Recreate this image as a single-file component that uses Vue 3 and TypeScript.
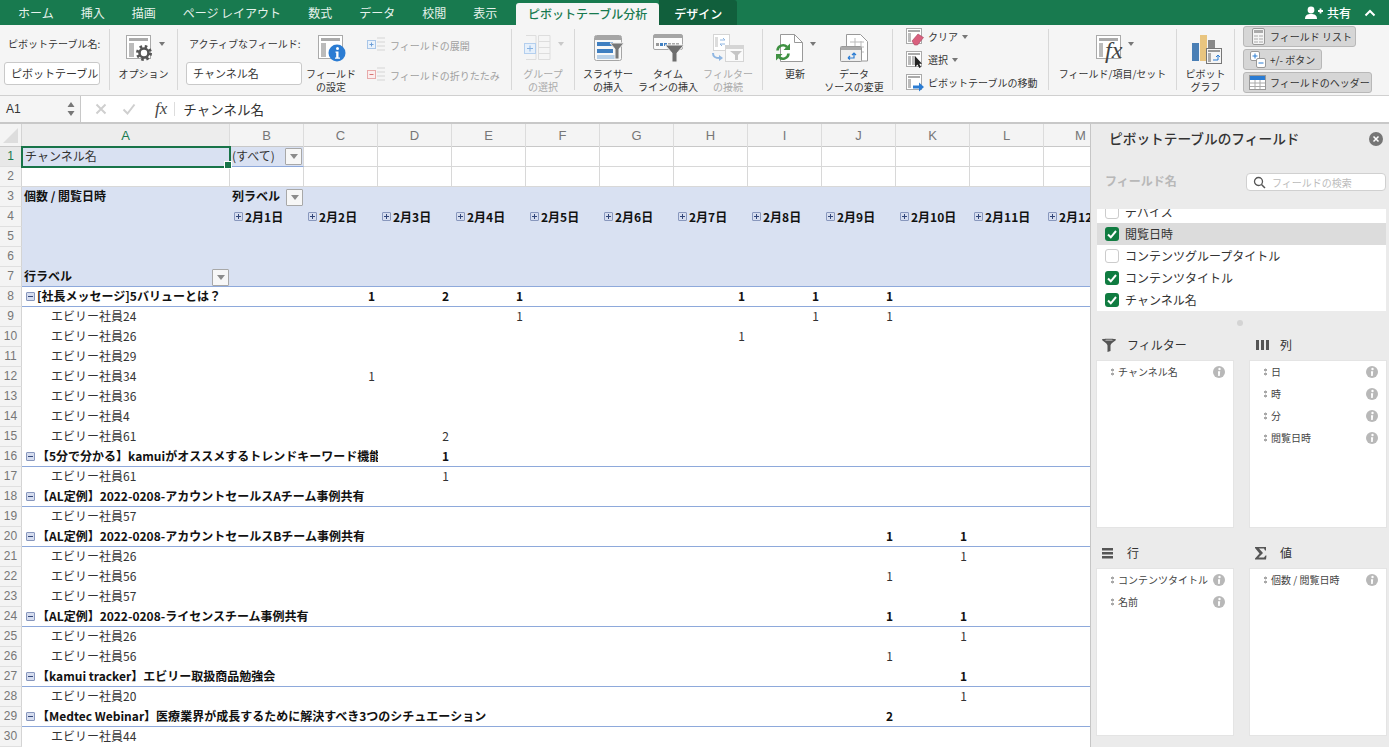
<script setup lang="ts">
type SheetRow = { n: number; label: string; bold?: boolean; values?: Record<number, number> }

const C = 4, D = 5, E = 6, H = 9, I = 10, J = 11, K = 12

const tabs = ['ホーム', '挿入', '描画', 'ページ レイアウト', '数式', 'データ', '校閲', '表示']
const columns = ['A', 'B', 'C', 'D', 'E', 'F', 'G', 'H', 'I', 'J', 'K', 'L', 'M']
const dates = ['2月1日', '2月2日', '2月3日', '2月4日', '2月5日', '2月6日', '2月7日', '2月8日', '2月9日', '2月10日', '2月11日', '2月12日']

const rows: SheetRow[] = [
  { n: 8, label: '[社長メッセージ]5バリューとは？', bold: true, values: { [C]: 1, [D]: 2, [E]: 1, [H]: 1, [I]: 1, [J]: 1 } },
  { n: 9, label: 'エビリー社員24', values: { [E]: 1, [I]: 1, [J]: 1 } },
  { n: 10, label: 'エビリー社員26', values: { [H]: 1 } },
  { n: 11, label: 'エビリー社員29' },
  { n: 12, label: 'エビリー社員34', values: { [C]: 1 } },
  { n: 13, label: 'エビリー社員36' },
  { n: 14, label: 'エビリー社員4' },
  { n: 15, label: 'エビリー社員61', values: { [D]: 2 } },
  { n: 16, label: '【5分で分かる】kamuiがオススメするトレンドキーワード機能', bold: true, values: { [D]: 1 } },
  { n: 17, label: 'エビリー社員61', values: { [D]: 1 } },
  { n: 18, label: '【AL定例】2022-0208-アカウントセールスAチーム事例共有', bold: true },
  { n: 19, label: 'エビリー社員57' },
  { n: 20, label: '【AL定例】2022-0208-アカウントセールスBチーム事例共有', bold: true, values: { [J]: 1, [K]: 1 } },
  { n: 21, label: 'エビリー社員26', values: { [K]: 1 } },
  { n: 22, label: 'エビリー社員56', values: { [J]: 1 } },
  { n: 23, label: 'エビリー社員57' },
  { n: 24, label: '【AL定例】2022-0208-ライセンスチーム事例共有', bold: true, values: { [J]: 1, [K]: 1 } },
  { n: 25, label: 'エビリー社員26', values: { [K]: 1 } },
  { n: 26, label: 'エビリー社員56', values: { [J]: 1 } },
  { n: 27, label: '【kamui tracker】エビリー取扱商品勉強会', bold: true, values: { [K]: 1 } },
  { n: 28, label: 'エビリー社員20', values: { [K]: 1 } },
  { n: 29, label: '【Medtec Webinar】医療業界が成長するために解決すべき3つのシチュエーション', bold: true, values: { [J]: 2 } },
  { n: 30, label: 'エビリー社員44' },
]

function labelEnd(row: SheetRow) {
  const keys = Object.keys(row.values ?? {}).map(Number)
  return keys.length ? Math.min(...keys) : 15
}

function valueEntries(row: SheetRow) {
  return Object.entries(row.values ?? {}).map(([col, value]) => ({ col: Number(col), value }))
}

const fields = [
  { name: 'デバイス', checked: false },
  { name: '閲覧日時', checked: true, active: true },
  { name: 'コンテンツグループタイトル', checked: false },
  { name: 'コンテンツタイトル', checked: true },
  { name: 'チャンネル名', checked: true },
]

const areas = [
  { title: 'フィルター', icon: 'filter', items: ['チャンネル名'] },
  { title: '列', icon: 'cols', items: ['日', '時', '分', '閲覧日時'] },
  { title: '行', icon: 'rows', items: ['コンテンツタイトル', '名前'] },
  { title: '値', icon: 'sum', items: ['個数 / 閲覧日時'] },
]
</script>

<template>
  <div class="app">
    <header class="tabbar">
      <nav class="tabs">
        <span v-for="tab in tabs" :key="tab" class="tab">{{ tab }}</span>
        <span class="tab-active">ピボットテーブル分析</span>
        <span class="tab-design">デザイン</span>
      </nav>
      <div class="share">
        <svg width="18" height="14" viewBox="0 0 18 14">
          <circle cx="6" cy="4" r="3.4" fill="#fff" />
          <path d="M0 13c0-4 2.5-5 6-5s6 1 6 5z" fill="#fff" />
          <path d="M13 5h5M15.5 2.500v5" stroke="#fff" stroke-width="1.800" />
        </svg>
        <span>共有</span>
        <svg class="chev" width="12" height="8" viewBox="0 0 12 8">
          <path d="M1.500 6.500 6 2l4.500 4.500" fill="none" stroke="#fff" stroke-width="2" />
        </svg>
      </div>
    </header>

    <section class="ribbon">
      <div class="group g1">
        <div class="field-label">ピボットテーブル名:</div>
        <div class="input">ピボットテーブル</div>
      </div>
      <i class="sep"></i>
      <div class="group g2">
        <div class="rbtn wide">
          <svg width="50" height="28" viewBox="0 0 50 28">
            <rect x="7.500" y="1.500" width="24" height="23" fill="#fff" stroke="#aaa" />
            <rect x="10" y="4" width="19" height="3" fill="#aaa" />
            <rect x="10" y="9" width="5" height="14" fill="#bbb" />
            <circle cx="25" cy="19" r="6.500" fill="none" stroke="#555" stroke-width="3" stroke-dasharray="2.500 2.600" />
            <circle cx="25" cy="19" r="4.500" fill="none" stroke="#555" stroke-width="2.600" />
            <path d="M40 8h6l-3 4z" fill="#777" />
          </svg>
          <span>オプション</span>
        </div>
      </div>
      <i class="sep"></i>
      <div class="group g3">
        <div class="field-col">
          <div class="field-label">アクティブなフィールド:</div>
          <div class="input">チャンネル名</div>
        </div>
        <div class="rbtn settings">
          <svg width="30" height="28" viewBox="0 0 30 28">
            <rect x="2.500" y="1.500" width="24" height="23" fill="#fff" stroke="#aaa" />
            <rect x="5" y="4" width="19" height="3" fill="#aaa" />
            <rect x="5" y="9" width="5" height="14" fill="#bbb" />
            <circle cx="21" cy="19" r="8.500" fill="#2b7cd3" />
            <circle cx="21.500" cy="14.500" r="1.500" fill="#fff" />
            <path d="M19.500 17.500h3v6h1.500v1.200h-5v-1.200h1.200v-4.800h-.7z" fill="#fff" />
          </svg>
          <span>フィールド<br />の設定</span>
        </div>
        <div class="drill">
          <div class="drill-row">
            <svg width="18" height="16" viewBox="0 0 18 16">
              <rect x=".5" y="3.500" width="8" height="8" fill="#eaf2fb" stroke="#a9c6e8" />
              <path d="M2.500 7.500h4M4.500 5.500v4" stroke="#6d9fd8" />
              <path d="M10 1h8M10 5h8M10 9h8M10 13h8" stroke="#d5d5d5" />
            </svg>
            <span>フィールドの展開</span>
          </div>
          <div class="drill-row">
            <svg width="18" height="16" viewBox="0 0 18 16">
              <rect x=".5" y="3.500" width="8" height="8" fill="#fbeeee" stroke="#e8aaaa" />
              <path d="M2.500 7.500h4" stroke="#d87474" />
              <path d="M10 1h8M10 5h8M10 9h8M10 13h8" stroke="#d5d5d5" />
            </svg>
            <span>フィールドの折りたたみ</span>
          </div>
        </div>
      </div>
      <i class="sep"></i>
      <div class="group g4">
        <div class="rbtn wide off">
          <svg width="50" height="28" viewBox="0 0 50 28">
            <path d="M8 1.500h10v24H8M20.500 1.500h11.500v24H20.500zM20.500 7.500h11.500M20.500 13.500h11.500M20.500 19.500h11.500" fill="none" stroke="#ddd" />
            <rect x="6.500" y="9.500" width="11" height="10" fill="#e6f0fb" stroke="#b4cfee" />
            <path d="M9 14.500h6M12 11.500v6" stroke="#86b2e2" />
            <path d="M40 8h6l-3 4z" fill="#c9c9c9" />
          </svg>
          <span>グループ<br />の選択</span>
        </div>
      </div>
      <i class="sep"></i>
      <div class="group g5">
        <div class="rbtn">
          <svg width="40" height="28" viewBox="0 0 40 28">
            <rect x="6.500" y="1.500" width="27" height="25" rx="2" fill="#f8f8f8" stroke="#a5a5a5" />
            <rect x="7" y="2" width="26" height="4" fill="#a5a5a5" />
            <rect x="9" y="8" width="16" height="4" fill="#3f7fc1" />
            <rect x="9" y="15" width="16" height="4" fill="#3f7fc1" />
            <rect x="9" y="21" width="20" height="4" fill="#b8d0e8" />
            <path d="M22 9h14l-5 6v10h-4v-10z" fill="#777" stroke="#eee" />
          </svg>
          <span>スライサー<br />の挿入</span>
        </div>
        <div class="rbtn">
          <svg width="60" height="28" viewBox="0 0 60 28">
            <rect x="15.500" y=".5" width="29" height="15" rx="1.500" fill="#fbfbfb" stroke="#a5a5a5" />
            <rect x="16" y="1" width="28" height="3" fill="#a5a5a5" />
            <path d="M18 9h3v3h-3z" fill="#999" />
            <path d="M22 9h3v3h-3zM26 9h3v3h-3z" fill="#3f7fc1" />
            <path d="M30 9h3v3h-3zM34 9h3v3h-3zM38 9h3v3h-3z" fill="#aaa" />
            <path d="M27 11h19l-7 8v9h-5v-9z" fill="#6d6d6d" stroke="#f0f0f0" />
          </svg>
          <span>タイム<br />ラインの挿入</span>
        </div>
        <div class="rbtn off">
          <svg width="40" height="28" viewBox="0 0 40 28">
            <rect x="5.500" y=".5" width="16" height="16" fill="#fff" stroke="#d5d5d5" />
            <rect x="7" y="3" width="3" height="10" fill="#ddd" />
            <path d="M12 6h5l-2-2M17 10h-5l2 2" fill="none" stroke="#8fb6e2" />
            <path d="M5 19c0 4 2 5 7 5" fill="none" stroke="#8fb6e2" stroke-width="2" />
            <path d="M11 21l4 3-4 3z" fill="#8fb6e2" />
            <rect x="17.500" y="11.500" width="18" height="16" fill="#fafafa" stroke="#d5d5d5" />
            <rect x="18" y="12" width="17" height="3" fill="#d5d5d5" />
            <path d="M22 17h12l-4 4v5h-3v-5z" fill="#c5c5c5" />
          </svg>
          <span>フィルター<br />の接続</span>
        </div>
      </div>
      <i class="sep"></i>
      <div class="group g6">
        <div class="rbtn update">
          <svg width="50" height="28" viewBox="0 0 50 28">
            <path d="M10.500 .5h14l8 8v19h-22z" fill="#fff" stroke="#999" />
            <path d="M24.500 .5v8h8" fill="none" stroke="#999" />
            <path d="M7.500 16.500a5.500 5.500 0 0 1 9.500-3.500M18.500 19.500a5.500 5.500 0 0 1-9.500 3.500" fill="none" stroke="#3f9142" stroke-width="2.600" />
            <path d="M20 9.500v6.500h-6.500zM6 26.500V20h6.500z" fill="#3f9142" />
            <path d="M40 8h6l-3 4z" fill="#777" />
          </svg>
          <span>更新</span>
        </div>
        <div class="rbtn source">
          <svg width="40" height="28" viewBox="0 0 40 28">
            <path d="M12.500 .5h14l7 7v19.500h-21z" fill="#fff" stroke="#999" />
            <path d="M16 8h14M16 13h14M16 18h14M21 4v20M27 7v17" stroke="#bbb" />
            <rect x="6.500" y="12.500" width="21" height="15" rx="1" fill="#eee" stroke="#999" />
            <rect x="7" y="13" width="20" height="3" fill="#aaa" />
            <path d="M14 24h6v-4M18 21l2-2 2 2M14 24l2-2M14 24l2 1.500" fill="none" stroke="#2b7cd3" stroke-width="1.200" />
          </svg>
          <span>データ<br />ソースの変更</span>
        </div>
      </div>
      <i class="sep"></i>
      <div class="group g7">
        <div class="small-row">
          <svg width="18" height="18" viewBox="0 0 18 18">
            <rect x=".5" y=".5" width="15" height="15" fill="#fff" stroke="#aaa" />
            <rect x="2" y="2" width="12" height="2" fill="#aaa" />
            <rect x="2" y="5" width="3" height="9" fill="#bbb" />
            <path d="M6 13l6-7 5.500 3.500-6 7.500h-3z" fill="#d9607e" stroke="#a84560" stroke-width=".6" />
          </svg>
          <span>クリア</span>
          <b class="caret"></b>
        </div>
        <div class="small-row">
          <svg width="18" height="18" viewBox="0 0 18 18">
            <rect x=".5" y=".5" width="15" height="15" fill="#fff" stroke="#aaa" />
            <rect x="2" y="2" width="12" height="2" fill="#aaa" />
            <rect x="2" y="5" width="3" height="9" fill="#bbb" />
            <rect x="6" y="5" width="3" height="9" fill="#bbb" />
            <path d="M9 5v11l2.500-2.500 1.800 3.500 1.700-.9-1.800-3.400H16z" fill="#222" />
          </svg>
          <span>選択</span>
          <b class="caret"></b>
        </div>
        <div class="small-row">
          <svg width="18" height="18" viewBox="0 0 18 18">
            <rect x=".5" y=".5" width="15" height="15" fill="#fff" stroke="#aaa" />
            <rect x="2" y="2" width="12" height="2" fill="#aaa" />
            <rect x="2" y="5" width="3" height="9" fill="#bbb" />
            <path d="M7 11.500h6v-3l5 4.500-5 4.500v-3h-6z" fill="#2b7cd3" />
          </svg>
          <span>ピボットテーブルの移動</span>
        </div>
      </div>
      <i class="sep"></i>
      <div class="group g8">
        <div class="rbtn wide">
          <svg width="50" height="28" viewBox="0 0 50 28">
            <rect x="8.500" y="1.500" width="24" height="23" fill="#fff" stroke="#aaa" />
            <rect x="11" y="4" width="19" height="3" fill="#aaa" />
            <rect x="11" y="9" width="4" height="14" fill="#bbb" />
            <text x="17" y="24" class="fx-big">fx</text>
            <path d="M40 8h6l-3 4z" fill="#777" />
          </svg>
          <span>フィールド/項目/セット</span>
        </div>
      </div>
      <i class="sep"></i>
      <div class="group g9">
        <div class="rbtn wide chart">
          <svg width="34" height="30" viewBox="0 0 34 30">
            <rect x="3" y="9" width="7" height="18" fill="#4a7fb5" />
            <rect x="11" y="1" width="7" height="26" fill="#e9c57f" />
            <rect x="19" y="6" width="7" height="8" fill="#888" />
            <rect x="17.500" y="14.500" width="15" height="15" fill="#f5f5f5" stroke="#777" />
            <rect x="19" y="16" width="12" height="2" fill="#999" />
            <rect x="19" y="19" width="3" height="9" fill="#aaa" />
            <path d="M24 26h5v-5M27 23l2-2 2 2" fill="none" stroke="#2b7cd3" />
          </svg>
          <span>ピボット<br />グラフ</span>
        </div>
      </div>
      <i class="sep"></i>
      <div class="group g10">
        <div class="toggle t1">
          <svg width="13" height="17" viewBox="0 0 13 17">
            <rect x=".5" y=".5" width="12" height="16" rx="1.500" fill="#f4f4f4" stroke="#999" />
            <rect x="2" y="2" width="9" height="3" fill="#aaa" />
            <path d="M2 8h4M7 8h4M2 11h4M7 11h4M2 14h4M7 14h4" stroke="#aaa" />
          </svg>
          <span>フィールド リスト</span>
        </div>
        <div class="toggle t2">
          <svg width="16" height="17" viewBox="0 0 16 17">
            <rect x=".5" y=".5" width="9" height="9" rx="1.500" fill="#fff" stroke="#999" />
            <path d="M2.500 5h5M5 2.500v5" stroke="#2b7cd3" />
            <rect x="6.500" y="7.500" width="9" height="9" rx="1.500" fill="#fff" stroke="#999" />
            <path d="M8.500 12h5" stroke="#2b7cd3" />
          </svg>
          <span>+/- ボタン</span>
        </div>
        <div class="toggle t3">
          <svg width="17" height="15" viewBox="0 0 17 15">
            <rect x=".5" y=".5" width="16" height="14" fill="#fff" stroke="#999" />
            <rect x="1" y="1" width="15" height="4" fill="#2b7cd3" />
            <path d="M1 8h15M1 11.500h15M6 5v9M11 5v9" stroke="#aaa" />
          </svg>
          <span>フィールドのヘッダー</span>
        </div>
      </div>
    </section>

    <section class="formula">
      <div class="namebox">
        <span>A1</span>
        <svg width="8" height="16" viewBox="0 0 8 16">
          <path d="M4 1l3.500 5h-7zM4 15l3.500-5h-7z" fill="#777" />
        </svg>
      </div>
      <svg class="fcancel" width="12" height="12" viewBox="0 0 12 12">
        <path d="M1.500 1.500l9 9M10.500 1.500l-9 9" stroke="#cfcfcf" stroke-width="2" />
      </svg>
      <svg class="fok" width="14" height="12" viewBox="0 0 14 12">
        <path d="M1.500 6.500l4 4 7-9" fill="none" stroke="#cfcfcf" stroke-width="2" />
      </svg>
      <span class="fx">fx</span>
      <span class="fbar"></span>
      <span class="ftext">チャンネル名</span>
    </section>

    <main class="workspace">
      <section class="sheet">
        <div class="row colhead">
          <div class="corner"><svg width="20" height="22" viewBox="0 0 20 22"><path d="M18 4v15H3z" fill="#ddd" /></svg></div>
          <div v-for="col in columns" :key="col" class="col" :class="{ current: col === 'A' }">{{ col }}</div>
        </div>

        <div class="row">
          <div class="rh current">1</div>
          <div class="cell grid sel active">チャンネル名<b class="handle"></b></div>
          <div class="cell grid sel pagefield">
            <span>(すべて)</span>
            <span class="fbtn"></span>
          </div>
          <div v-for="i in 11" :key="i" class="cell grid"></div>
        </div>
        <div class="row">
          <div class="rh">2</div>
          <div v-for="i in 13" :key="i" class="cell grid"></div>
        </div>
        <div class="row band">
          <div class="rh">3</div>
          <div class="cell strong corner-label">個数 / 閲覧日時</div>
          <div class="cell strong withbtn"><span>列ラベル</span><span class="fbtn"></span></div>
        </div>
        <div class="row band">
          <div class="rh">4</div>
          <div class="cell"></div>
          <div v-for="d in dates" :key="d" class="cell strong date">
            <span class="box plus"></span>{{ d }}
          </div>
        </div>
        <div class="row band">
          <div class="rh">5</div>
        </div>
        <div class="row band">
          <div class="rh">6</div>
        </div>
        <div class="row band lined">
          <div class="rh">7</div>
          <div class="cell strong withbtn"><span>行ラベル</span><span class="fbtn"></span></div>
        </div>

        <div v-for="row in rows" :key="row.n" class="row" :class="{ lined: row.bold }">
          <div class="rh">{{ row.n }}</div>
          <div
            class="cell label"
            :class="row.bold ? 'strong parent' : 'child'"
            :style="{ gridColumn: `2 / ${labelEnd(row)}` }"
          >
            <span v-if="row.bold" class="box minus"></span><span class="label-text">{{ row.label }}</span>
          </div>
          <div
            v-for="v in valueEntries(row)"
            :key="v.col"
            class="cell num"
            :class="{ strong: row.bold }"
            :style="{ gridColumn: v.col }"
          >
            {{ v.value }}
          </div>
        </div>
      </section>

      <aside class="panel">
        <div class="panel-head">
          <span>ピボットテーブルのフィールド</span>
          <svg width="14" height="14" viewBox="0 0 14 14">
            <circle cx="7" cy="7" r="7" fill="#757575" />
            <path d="M4.500 4.500l5 5M9.500 4.500l-5 5" stroke="#fff" stroke-width="1.500" />
          </svg>
        </div>
        <div class="search-row">
          <span class="search-label">フィールド名</span>
          <div class="search">
            <svg width="13" height="13" viewBox="0 0 13 13">
              <circle cx="5.500" cy="5.500" r="4" fill="none" stroke="#555" stroke-width="1.300" />
              <path d="M8.500 8.500l3.500 3.500" stroke="#555" stroke-width="1.500" />
            </svg>
            <span>フィールドの検索</span>
          </div>
        </div>
        <div class="fields">
          <div v-for="f in fields" :key="f.name" class="field" :class="{ hl: f.active }">
            <span class="check" :class="{ on: f.checked }">
              <svg v-if="f.checked" width="14" height="14" viewBox="0 0 14 14">
                <path d="M3 7.500l2.800 2.800L11 4" fill="none" stroke="#fff" stroke-width="2" />
              </svg>
            </span>
            <span class="field-name">{{ f.name }}</span>
          </div>
        </div>
        <div class="grip"></div>
        <div class="areas">
          <div v-for="area in areas" :key="area.title" class="area">
            <div class="area-title">
              <svg width="16" height="14" viewBox="0 0 16 14">
                <path v-if="area.icon === 'filter'" d="M1 1.500C1 .5 15 .5 15 1.500c0 1.500-5 3-5.500 6V13l-3 1V7.500C6 4.500 1 3 1 1.500zM3.500 2c1.500.7 7.500.7 9 0-1.500-.5-7.500-.5-9 0z" fill="#555" fill-rule="evenodd" />
                <path v-else-if="area.icon === 'cols'" d="M2 2h3v10H2zM7 2h3v10H7zM12 2h3v10h-3z" fill="#555" />
                <path v-else-if="area.icon === 'rows'" d="M1 2h11v2.500H1zM1 6h11v2.500H1zM1 10h11v2.500H1z" fill="#555" />
                <path v-else d="M1 1h11v3.500h-1L10 2.500H5l4 4.500-4.500 4.500H10l1.500-2h1L12 13.500H1V12.500L5.500 7.500 1 2z" fill="#555" />
              </svg>
              <span>{{ area.title }}</span>
            </div>
            <div class="area-box">
              <div v-for="item in area.items" :key="item" class="item">
                <span class="dots"></span>
                <span class="item-name">{{ item }}</span>
                <svg width="12" height="12" viewBox="0 0 12 12">
                  <circle cx="6" cy="6" r="6" fill="#b8b8b8" />
                  <circle cx="6.500" cy="3" r="1.200" fill="#fff" />
                  <path d="M5 5.200h2.200l-.5 4.800H5.200z" fill="#fff" />
                </svg>
              </div>
            </div>
          </div>
        </div>
      </aside>
    </main>
  </div>
</template>

<style>
html,
body {
  margin: 0;
  overflow: hidden;
  background: #fff;
}
</style>

<style scoped>
.app {
  width: 1389px;
  height: 747px;
  overflow: hidden;
  display: flex;
  flex-direction: column;
  font-family: "Noto Sans CJK JP", "Noto Sans", sans-serif;
  font-size: 12px;
  color: #333;
}

.tabbar {
  height: 25px;
  flex: none;
  background: #187a4f;
  display: flex;
  justify-content: space-between;
  color: #fff;
}

.tabs {
  display: flex;
  align-items: stretch;
  padding-left: 18px;
  gap: 27px;
  line-height: 25px;
}

.tab {
  color: #e6f2ec;
  white-space: nowrap;
}

.tab-active {
  margin: 3px 0 0 -8px;
  width: 143px;
  text-align: center;
  background: #f5f5f5;
  color: #187a4f;
  font-weight: 500;
  line-height: 22px;
  border-radius: 3px 3px 0 0;
}

.tab-design {
  margin: 0 0 0 -27px;
  padding-top: 3px;
  width: 78px;
  text-align: center;
  background: #115f3c;
  line-height: 22px;
  font-weight: 500;
  border-radius: 0 3px 0 0;
}

.share {
  display: flex;
  align-items: center;
  padding-right: 13px;
  gap: 4px;
  font-weight: 500;
  font-size: 12px;
}

.chev {
  margin-left: 9px;
}

.ribbon {
  height: 70px;
  flex: none;
  display: flex;
  background: #f5f5f5;
  border-bottom: 1px solid #d0d0d0;
  font-size: 10px;
  color: #333;
}

.sep {
  flex: none;
  width: 1px;
  height: 61px;
  margin-top: 4px;
  background: #d8d8d8;
}

.group {
  flex: none;
  height: 70px;
  box-sizing: border-box;
  display: flex;
}

.g1 {
  width: 109px;
  flex-direction: column;
  padding-left: 4px;
}

.g1 .field-label {
  padding-left: 4px;
}

.field-label {
  margin-top: 12px;
  line-height: 14px;
  white-space: nowrap;
}

.input {
  box-sizing: border-box;
  width: 96px;
  height: 23px;
  margin-top: 11px;
  background: #fff;
  border: 1px solid #c9c9c9;
  border-radius: 3px;
  padding-left: 6px;
  font-size: 11px;
  line-height: 21px;
  white-space: nowrap;
  overflow: hidden;
}

.g2 {
  width: 67px;
}

.g3 {
  width: 333px;
}

.field-col {
  width: 116px;
  margin-left: 8px;
}

.field-col .field-label {
  padding-left: 3px;
}

.field-col .input {
  width: 116px;
}

.rbtn {
  display: flex;
  flex-direction: column;
  align-items: center;
  padding-top: 9px;
  width: 60px;
  text-align: center;
  line-height: 13px;
  white-space: nowrap;
}

.rbtn svg {
  flex: none;
  overflow: visible;
  margin-bottom: 5px;
}

.rbtn.chart svg {
  margin-bottom: 3px;
}

.rbtn svg text {
  fill: #444;
}

.rbtn.wide {
  width: 100%;
}

.rbtn.off {
  color: #aaa;
}

.settings {
  width: 58px;
}

.drill {
  margin-left: 7px;
  padding-top: 12px;
  color: #a0a0a0;
  display: flex;
  flex-direction: column;
  gap: 14px;
}

.drill-row {
  display: flex;
  align-items: center;
  gap: 5px;
  height: 16px;
  white-space: nowrap;
}

.g4 {
  width: 62px;
}

.g5 {
  width: 187px;
  padding-left: 3px;
}

.g6 {
  width: 129px;
  padding-left: 2px;
}

.source {
  width: 58px;
}

.g7 {
  width: 155px;
  padding-left: 13px;
  flex-direction: column;
}

.small-row {
  height: 23px;
  display: flex;
  align-items: center;
  gap: 4px;
  white-space: nowrap;
}

.caret {
  width: 0;
  height: 0;
  border: 3px solid transparent;
  border-top: 4px solid #777;
  border-bottom: 0;
}

.g8 {
  width: 127px;
}

.g9 {
  width: 57px;
}

.g10 {
  flex-direction: column;
  gap: 2px;
  padding: 1px 0 0 8px;
}

.toggle {
  box-sizing: border-box;
  height: 21px;
  display: flex;
  align-items: center;
  background: #d6d6d6;
  border: 1px solid #b8b8b8;
  border-radius: 3px;
  white-space: nowrap;
}

.toggle svg {
  flex: none;
}

.t1 {
  width: 113px;
  padding-left: 8px;
  gap: 5px;
}

.t2 {
  width: 79px;
  padding-left: 6px;
  gap: 4px;
}

.t3 {
  width: 129px;
  padding-left: 5px;
  gap: 4px;
}

.fx-big {
  font-family: "Liberation Serif", serif;
  font-style: italic;
  font-size: 24px;
}

.formula {
  height: 26px;
  flex: none;
  border-bottom: 2px solid #c8c8c8;
  display: flex;
  align-items: center;
  background: #fff;
}

.namebox {
  box-sizing: border-box;
  width: 81px;
  height: 100%;
  display: flex;
  align-items: center;
  justify-content: space-between;
  padding: 0 5px 0 6px;
  border-right: 1px solid #c8c8c8;
  background: #f5f5f5;
  font-family: "Liberation Sans", sans-serif;
  font-size: 12px;
}

.fcancel {
  margin-left: 14px;
}

.fok {
  margin-left: 15px;
}

.fx {
  margin-left: 19px;
  font-family: "Liberation Serif", serif;
  font-style: italic;
  font-size: 17px;
  color: #444;
}

.fbar {
  width: 1px;
  height: 14px;
  margin-left: 7px;
  background: #ddd;
}

.ftext {
  margin-left: 8px;
  font-size: 13.5px;
}

.workspace {
  flex: 1;
  min-height: 0;
  display: flex;
}

.sheet {
  width: 1090px;
  flex: none;
  overflow: hidden;
  background: #fff;
}

.row {
  display: grid;
  grid-template-columns: 22px 208px repeat(12, 74px);
  grid-auto-rows: 20px;
  width: 1118px;
  height: 20px;
  line-height: 18px;
}

.row.lined {
  background: linear-gradient(#8ea9db, #8ea9db) no-repeat left bottom / 100% 1px;
}

.band {
  background: #d9e1f2;
}

.band.lined {
  background: linear-gradient(#8ea9db, #8ea9db) no-repeat left bottom / 100% 1px, #d9e1f2;
}

.colhead {
  height: 23px;
  grid-auto-rows: 23px;
  line-height: 23px;
  font-family: "Liberation Sans", sans-serif;
  font-size: 13px;
  color: #777;
  background: #f4f4f4;
  border-bottom: 1px solid #c8c8c8;
  box-sizing: border-box;
}

.corner {
  border-right: 1px solid #d4d4d4;
  display: flex;
}

.col {
  text-align: center;
  border-right: 1px solid #dcdcdc;
}

.col.current {
  color: #187a4f;
  background: #ededed;
}

.rh {
  grid-column: 1;
  background: #f4f4f4;
  border-right: 1px solid #d4d4d4;
  border-bottom: 1px solid #e0e0e0;
  box-sizing: border-box;
  text-align: center;
  font-family: "Liberation Sans", sans-serif;
  font-size: 12px;
  line-height: 19px;
  color: #777;
}

.rh.current {
  color: #187a4f;
  background: #e8e8e8;
}

.cell {
  position: relative;
  box-sizing: border-box;
  white-space: nowrap;
  overflow: hidden;
  min-width: 0;
}

.grid {
  border-right: 1px solid #d8d8d8;
  border-bottom: 1px solid #d8d8d8;
}

.sel {
  background: #d9e1f2;
}

.active {
  overflow: visible;
  padding-left: 3px;
  outline: 2px solid #187449;
  outline-offset: -1px;
  z-index: 2;
  border-color: #fff;
}

.handle {
  position: absolute;
  right: -3px;
  bottom: -3px;
  width: 6px;
  height: 6px;
  background: #187449;
  border: 1px solid #fff;
  box-sizing: content-box;
}

.pagefield {
  display: flex;
  justify-content: space-between;
  align-items: center;
  padding: 0 1px 0 2px;
  border-bottom-color: #8ea9db;
}

.withbtn {
  overflow: visible;
  display: flex;
  justify-content: space-between;
  align-items: center;
  padding: 0 1px 0 2px;
}

.pagefield > span:first-child,
.withbtn > span:first-child {
  margin-top: -2px;
}

.fbtn {
  box-sizing: border-box;
  flex: none;
  width: 17px;
  height: 17px;
  background: #f7f7f7;
  border: 1px solid #a8a8a8;
  border-radius: 1px;
  display: flex;
  align-items: center;
  justify-content: center;
}

.fbtn::after {
  content: "";
  border: 4px solid transparent;
  border-top: 5px solid #8c8c8c;
  border-bottom: 0;
}

.strong {
  font-weight: 700;
  color: #111;
}

.corner-label {
  padding-left: 2px;
}

.date {
  padding: 0 0 1px 4px;
  display: flex;
  align-items: center;
  gap: 2px;
  overflow: hidden;
}

.box {
  box-sizing: border-box;
  flex: none;
  display: inline-block;
  position: relative;
  width: 9px;
  height: 9px;
  background: #d6ddef;
  border: 1px solid #8897bd;
  border-radius: 1px;
}

.box::before {
  content: "";
  position: absolute;
  left: 1px;
  top: 3px;
  width: 5px;
  height: 1px;
  background: #33477a;
}

.plus::after {
  content: "";
  position: absolute;
  left: 3px;
  top: 1px;
  width: 1px;
  height: 5px;
  background: #33477a;
}

.label {
  display: flex;
  align-items: center;
  padding-bottom: 1px;
}

.label-text {
  margin-top: -1px;
}

.parent {
  padding-left: 4px;
}

.parent .box {
  margin-right: 2px;
}

.child {
  padding-left: 29px;
}

.num {
  text-align: right;
  padding-right: 3px;
  grid-row: 1;
}

.panel {
  flex: 1;
  min-width: 0;
  box-sizing: border-box;
  border-left: 1px solid #c6c6c6;
  background: #ebebeb;
  padding: 0 3px 0 6px;
  display: flex;
  flex-direction: column;
}

.panel-head {
  height: 30px;
  flex: none;
  display: flex;
  align-items: center;
  justify-content: space-between;
  padding: 0 3px 2px 12px;
  box-sizing: border-box;
  font-size: 13.7px;
  font-weight: 500;
  color: #333;
  white-space: nowrap;
}

.panel-head svg {
  margin-top: 2px;
}

.search-row {
  flex: none;
  margin-top: 19px;
  display: flex;
  justify-content: space-between;
  align-items: center;
  padding-left: 8px;
}

.search-label {
  margin-top: -3px;
  color: #b8b8b8;
  font-weight: 700;
}

.search {
  box-sizing: border-box;
  width: 140px;
  height: 18px;
  display: flex;
  align-items: center;
  gap: 6px;
  padding-left: 6px;
  background: #fff;
  border: 1px solid #d0d0d0;
  border-radius: 4px;
  font-size: 10px;
  color: #bbb;
}

.fields {
  flex: none;
  height: 102px;
  margin-top: 18px;
  overflow: hidden;
  background: #fff;
}

.field {
  height: 22px;
  display: flex;
  align-items: center;
  gap: 6px;
  padding-left: 8px;
  white-space: nowrap;
}

.field-name {
  margin-top: -2px;
}

.field:first-child {
  margin-top: -8px;
}

.field.hl {
  background: #dcdcdc;
}

.check {
  box-sizing: border-box;
  flex: none;
  width: 14px;
  height: 14px;
  border: 1px solid #ccc;
  border-radius: 3px;
  background: #fff;
  display: flex;
}

.check.on {
  border: 0;
  background: #107c41;
}

.grip {
  flex: none;
  width: 6px;
  height: 6px;
  margin: 9px 0 0 140px;
  border-radius: 50%;
  background: #d4d4d4;
}

.areas {
  flex: none;
  margin-top: 9px;
  display: grid;
  grid-template-columns: 136px 136px;
  column-gap: 17px;
  row-gap: 16px;
}

.area-title {
  height: 26px;
  box-sizing: border-box;
  padding: 0 0 7px 4px;
  display: flex;
  align-items: center;
  gap: 10px;
  color: #333;
}

.area-box {
  height: 166px;
  background: #fff;
  box-shadow: 0 0 0 1px #e4e4e4;
}

.item {
  height: 22px;
  display: flex;
  align-items: center;
  padding: 0 8px 0 14px;
  font-size: 10px;
  color: #444;
}

.item svg {
  flex: none;
}

.dots {
  flex: none;
  width: 3px;
  height: 8px;
  margin-right: 4px;
  background: radial-gradient(circle, #a8a8a8 1.400px, transparent 1.600px) 0 0 / 3px 4px;
}

.item-name {
  flex: 1;
  margin-top: -2px;
  white-space: nowrap;
}
</style>
